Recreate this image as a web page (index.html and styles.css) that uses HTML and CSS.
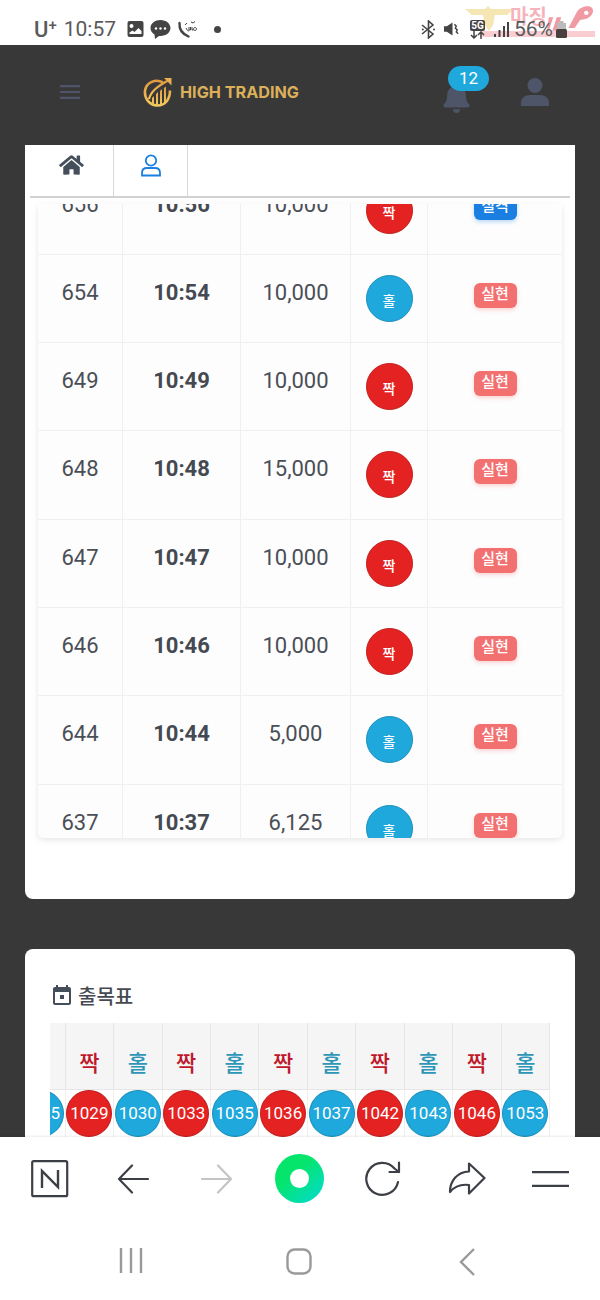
FILE: index.html
```html
<!DOCTYPE html>
<html lang="ko">
<head>
    <meta charset="UTF-8">
    <meta name="viewport" content="width=device-width, initial-scale=1.0">
    <title>High Trading</title>
    <link rel="stylesheet" href="styles.css">
</head>
<body>
    <!-- Phone status bar -->
    <div class="status-bar">
        <span class="carrier">U<sup>+</sup></span>
        <span class="clock">10:57</span>
        <svg class="st-icon" width="17" height="18" viewBox="0 0 16 18"><path fill="#444" fill-rule="evenodd" d="M2 1h12a2 2 0 0 1 2 2v12a2 2 0 0 1-2 2H2a2 2 0 0 1-2-2V3a2 2 0 0 1 2-2zm2 3a2 2 0 1 0 0 4 2 2 0 0 0 0-4zM2 14h12v-3l-3-3-4 4-2-1.500-3 2z"/></svg>
        <svg class="st-icon" width="21" height="21" viewBox="0 0 21 21"><path fill="#444" d="M10.500 1C5 1 .5 4.500.5 9c0 2.700 1.600 5 4 6.500L5 20l4-3.100c.5.100 1 .1 1.500.1 5.500 0 10-3.600 10-8s-4.500-8-10-8z"/><circle cx="6" cy="9.500" r="1.200" fill="#fff"/><circle cx="10.500" cy="9.500" r="1.200" fill="#fff"/><circle cx="15" cy="9.500" r="1.200" fill="#fff"/></svg>
        <svg class="st-icon" width="24" height="20" viewBox="0 0 24 20"><path fill="none" stroke="#444" stroke-width="2.400" stroke-linecap="round" d="M2.500 4c-.5 6 3 11 9 13.500"/><path fill="none" stroke="#444" stroke-width="1" d="M9 9c1 1 1 3 3 3M12 8v3h1.500v-3M15 8v3h1.500M18 8.500a1.500 1.500 0 1 0 .1 0M14 3l2 1 2-1.500M8 6l2-2"/></svg>
        <span class="st-dot"></span>

        <span class="status-right">
            <svg width="15" height="19" viewBox="0 0 15 19"><path fill="none" stroke="#444" stroke-width="1.600" d="M1 5l11 9-4.500 4V1L12 5 1 14"/><circle cx="1.800" cy="9.500" r="1" fill="#444"/><circle cx="13" cy="9.500" r="1" fill="#444"/></svg>
            <svg width="17" height="18" viewBox="0 0 18 18"><path fill="#444" d="M0 6h3l6-4v14l-6-4H0z"/><path fill="none" stroke="#444" stroke-width="1.500" d="M11 4l2 2-1 2 2 2-1 2 2 2"/></svg>
            <span class="net">
                <span class="net-5g">5G</span>
                <svg width="17" height="8" viewBox="0 0 17 8"><path fill="none" stroke="#444" stroke-width="1.500" d="M5 0v7M2 4l3 3 3-3M12 8V1M9 4l3-3 3 3"/></svg>
            </span>
            <svg width="15" height="17" viewBox="0 0 15 17"><path fill="#444" d="M0 13h2v3H0zM4.500 9h2v7h-2zM9 5h2v11H9zM13 1h2v15h-2z"/></svg>
            <span class="battery-pct">56%</span>
            <svg width="11" height="17" viewBox="0 0 11 17"><path fill="#bbb" d="M3.500 0h4v2h2.500v6H1V2h2.500z"/><rect x="0" y="8" width="11" height="9" rx="1.500" fill="#4a3f3f"/></svg>
        </span>

        <!-- watermark over the status bar -->
        <div class="watermark">
            <svg class="wm-eagle" width="48" height="30" viewBox="0 0 48 30"><path fill="#f5e6b4" d="M0 3h20l3-3 3 3h22l-6 6H30l-2 10-4 6-4-6-2-10H7z"/></svg>
            <span class="wm-text">마징</span>
            <svg class="wm-tail" width="50" height="34" viewBox="0 0 56 34"><path fill="#f29aa4" d="M2 14h5l-5 15H0zM11 14h5l-5 15H6zM33 9c3-7 13-9 17-6 4 4 0 11-7 13l-6 1-6 9h-7z"/><circle cx="44" cy="9" r="2.500" fill="#fff"/></svg>
            <div class="wm-bar"></div>
        </div>
    </div>

    <div class="main">
        <div class="topbar">
            <svg class="menu-icon" width="20" height="14" viewBox="0 0 20 14"><path fill="#4f5568" d="M0 0h20v2.200H0zM0 5.900h20v2.200H0zM0 11.800h20V14H0z"/></svg>
            <svg class="logo-mark" width="29" height="29" viewBox="0 0 29 29">
                <defs>
                    <linearGradient id="gold" x1="0" y1="0" x2="0" y2="1">
                        <stop offset="0" stop-color="#e0993f"/>
                        <stop offset="1" stop-color="#f2c75c"/>
                    </linearGradient>
                </defs>
                <path fill="none" stroke="url(#gold)" stroke-width="2.600" d="M20 4.500C13 .5 3 4 2 13c-.8 8 5 14 12 14.500 8 .3 13-6 13-15"/>
                <path fill="none" stroke="url(#gold)" stroke-width="2.200" d="M6 21C8 13 15 8 26 2"/>
                <path fill="#e8ae50" d="M21 0h7.500v7.500z"/>
                <path fill="url(#gold)" d="M9 20l2-2v8l-2-1zM13 16l2-2v13h-2zM17 13l2-2v15l-2 1zM21 10l2-1.500v15l-2 1.800z"/>
            </svg>
            <span class="logo-text">HIGH TRADING</span>
            <div class="bell-wrap">
                <svg width="27" height="30" viewBox="0 0 448 512"><path fill="#4f5568" d="M224 512c35.320 0 63.970-28.650 63.970-64H160.030c0 35.350 28.650 64 63.970 64zm215.390-149.710c-19.320-20.760-55.470-51.990-55.470-154.290 0-77.700-54.480-139.900-127.940-155.160V32c0-17.670-14.320-32-31.980-32s-31.980 14.330-31.980 32v20.840C118.560 68.100 64.080 130.300 64.080 208c0 102.300-36.150 133.530-55.470 154.290-6 6.450-8.660 14.160-8.610 21.710.11 16.400 12.980 32 32.100 32h383.800c19.120 0 32-15.600 32.100-32 .05-7.550-2.610-15.270-8.610-21.710z"/></svg>
                <span class="bell-badge">12</span>
            </div>
            <svg class="user-icon" width="28" height="28" viewBox="0 0 28 28"><circle cx="14" cy="7.500" r="7.500" fill="#4f5568"/><path fill="#4f5568" d="M0 28v-3c0-5 4-8 9-8h10c5 0 9 3 9 8v3z"/></svg>
        </div>

        <div class="card card-trades">
            <div class="tabs">
                <div class="tab tab-home">
                    <svg width="25" height="22" viewBox="0 0 576 512"><path fill="#454f5b" d="M280.370 148.260L96 300.110V464a16 16 0 0 0 16 16l112.060-.29a16 16 0 0 0 15.920-16V368a16 16 0 0 1 16-16h64a16 16 0 0 1 16 16v95.640a16 16 0 0 0 16 16.050L464 480a16 16 0 0 0 16-16V300L295.670 148.260a12.190 12.190 0 0 0-15.300 0zM571.600 251.470L488 182.560V44.050a12 12 0 0 0-12-12h-56a12 12 0 0 0-12 12v72.610L318.470 43a48 48 0 0 0-61 0L4.340 251.470a12 12 0 0 0-1.600 16.900l25.500 31A12 12 0 0 0 45.150 301l235.220-193.740a12.190 12.190 0 0 1 15.300 0L530.900 301a12 12 0 0 0 16.900-1.600l25.500-31a12 12 0 0 0-1.700-16.930z"/></svg>
                </div>
                <div class="tab tab-user">
                    <svg width="20" height="23" viewBox="0 0 20 23"><circle cx="10" cy="6.500" r="5.200" fill="none" stroke="#1a7fe0" stroke-width="1.800"/><path fill="none" stroke="#1a7fe0" stroke-width="1.800" d="M1 21.500v-2.500c0-3 2-5 5-5h8c3 0 5 2 5 5v2.500z"/></svg>
                </div>
            </div>

            <div class="trade-view">
                <div class="trade-list">
                    <div class="trade-row">
                        <div class="cell">656</div>
                        <div class="cell cell-time">10:56</div>
                        <div class="cell">10,000</div>
                        <div class="cell"><span class="ball ball-red">짝</span></div>
                        <div class="cell"><span class="tag tag-blue">실격</span></div>
                    </div>
                    <div class="trade-row">
                        <div class="cell">654</div>
                        <div class="cell cell-time">10:54</div>
                        <div class="cell">10,000</div>
                        <div class="cell"><span class="ball ball-blue">홀</span></div>
                        <div class="cell"><span class="tag">실현</span></div>
                    </div>
                    <div class="trade-row">
                        <div class="cell">649</div>
                        <div class="cell cell-time">10:49</div>
                        <div class="cell">10,000</div>
                        <div class="cell"><span class="ball ball-red">짝</span></div>
                        <div class="cell"><span class="tag">실현</span></div>
                    </div>
                    <div class="trade-row">
                        <div class="cell">648</div>
                        <div class="cell cell-time">10:48</div>
                        <div class="cell">15,000</div>
                        <div class="cell"><span class="ball ball-red">짝</span></div>
                        <div class="cell"><span class="tag">실현</span></div>
                    </div>
                    <div class="trade-row">
                        <div class="cell">647</div>
                        <div class="cell cell-time">10:47</div>
                        <div class="cell">10,000</div>
                        <div class="cell"><span class="ball ball-red">짝</span></div>
                        <div class="cell"><span class="tag">실현</span></div>
                    </div>
                    <div class="trade-row">
                        <div class="cell">646</div>
                        <div class="cell cell-time">10:46</div>
                        <div class="cell">10,000</div>
                        <div class="cell"><span class="ball ball-red">짝</span></div>
                        <div class="cell"><span class="tag">실현</span></div>
                    </div>
                    <div class="trade-row">
                        <div class="cell">644</div>
                        <div class="cell cell-time">10:44</div>
                        <div class="cell">5,000</div>
                        <div class="cell"><span class="ball ball-blue">홀</span></div>
                        <div class="cell"><span class="tag">실현</span></div>
                    </div>
                    <div class="trade-row">
                        <div class="cell">637</div>
                        <div class="cell cell-time">10:37</div>
                        <div class="cell">6,125</div>
                        <div class="cell"><span class="ball ball-blue">홀</span></div>
                        <div class="cell"><span class="tag">실현</span></div>
                    </div>
                </div>
            </div>
        </div>

        <div class="card card-chart">
            <h2 class="chart-title">
                <svg width="24" height="24" viewBox="0 0 24 24"><path fill="#454f5b" d="M19 4h-1V2h-2v2H8V2H6v2H5c-1.100 0-2 .9-2 2v14c0 1.100.9 2 2 2h14c1.100 0 2-.9 2-2V6c0-1.100-.9-2-2-2zm0 16H5V9h14v11zM10 12h4v4h-4z"/></svg>
                출목표
            </h2>
            <div class="chart-view">
                <div class="chart-grid">
                    <div class="ch-head"></div>
                    <div class="ch-head ch-red">짝</div>
                    <div class="ch-head ch-blue">홀</div>
                    <div class="ch-head ch-red">짝</div>
                    <div class="ch-head ch-blue">홀</div>
                    <div class="ch-head ch-red">짝</div>
                    <div class="ch-head ch-blue">홀</div>
                    <div class="ch-head ch-red">짝</div>
                    <div class="ch-head ch-blue">홀</div>
                    <div class="ch-head ch-red">짝</div>
                    <div class="ch-head ch-blue">홀</div>

                    <div class="ch-cell"><span class="num ball-blue">1025</span></div>
                    <div class="ch-cell"><span class="num ball-red">1029</span></div>
                    <div class="ch-cell"><span class="num ball-blue">1030</span></div>
                    <div class="ch-cell"><span class="num ball-red">1033</span></div>
                    <div class="ch-cell"><span class="num ball-blue">1035</span></div>
                    <div class="ch-cell"><span class="num ball-red">1036</span></div>
                    <div class="ch-cell"><span class="num ball-blue">1037</span></div>
                    <div class="ch-cell"><span class="num ball-red">1042</span></div>
                    <div class="ch-cell"><span class="num ball-blue">1043</span></div>
                    <div class="ch-cell"><span class="num ball-red">1046</span></div>
                    <div class="ch-cell"><span class="num ball-blue">1053</span></div>
                </div>
            </div>
        </div>
    </div>

    <!-- Browser toolbar -->
    <div class="toolbar">
        <svg width="38" height="38" viewBox="0 0 38 38"><rect x="1.200" y="1.200" width="35" height="35" rx="1.500" fill="none" stroke="#3c4046" stroke-width="2.200"/><path fill="none" stroke="#3c4046" stroke-width="2.400" d="M11 28V11l16 16V10"/></svg>
        <svg width="32" height="30" viewBox="0 0 32 30"><path fill="none" stroke="#3c4046" stroke-width="2.200" stroke-linecap="round" stroke-linejoin="round" d="M31 15H2M15 1.500L2 15l13 13.500"/></svg>
        <svg width="32" height="30" viewBox="0 0 32 30"><path fill="none" stroke="#c4c4c4" stroke-width="2.200" stroke-linecap="round" stroke-linejoin="round" d="M1 15h29M17 1.500L30 15 17 28.500"/></svg>
        <svg width="49" height="49" viewBox="0 0 49 49">
            <defs>
                <linearGradient id="green" x1="0.200" y1="0.100" x2="0.900" y2="0.900">
                    <stop offset="0.300" stop-color="#05e56c"/>
                    <stop offset="1" stop-color="#02dcc4"/>
                </linearGradient>
            </defs>
            <circle cx="24.500" cy="24.500" r="24.500" fill="url(#green)"/>
            <circle cx="24.500" cy="24.500" r="9.500" fill="#fff"/>
        </svg>
        <svg width="36" height="36" viewBox="0 0 36 36"><path fill="none" stroke="#3c4046" stroke-width="2.200" stroke-linecap="round" stroke-linejoin="round" d="M33 21a16 16 0 1 1-3.500-13.500L34 11M34 1.500V11h-9.500"/></svg>
        <svg width="38" height="33" viewBox="0 0 38 33"><path fill="none" stroke="#3c4046" stroke-width="2.200" stroke-linejoin="round" d="M21 1.500L36.500 16 21 31.500V23C13 22 6 25 2 30 2 19 9 10 21 9.500z"/></svg>
        <svg width="37" height="16" viewBox="0 0 37 16"><path fill="#3c4046" d="M0 0h37v2.200H0zM0 13.800h37V16H0z"/></svg>
    </div>

    <!-- Android navigation bar -->
    <div class="navbar">
        <svg width="24" height="25" viewBox="0 0 24 25"><path fill="none" stroke="#9a9a9a" stroke-width="2.400" d="M2 0v25M12 0v25M22 0v25"/></svg>
        <svg width="26" height="27" viewBox="0 0 26 27"><rect x="1.500" y="1.500" width="23" height="24" rx="7" fill="none" stroke="#9a9a9a" stroke-width="2.400"/></svg>
        <svg width="17" height="28" viewBox="0 0 17 28"><path fill="none" stroke="#9a9a9a" stroke-width="2.400" d="M15 1L2 14l13 13"/></svg>
    </div>
</body>
</html>
```

FILE: styles.css
```css
* {
    box-sizing: border-box;
}

body {
    margin: 0;
    width: 600px;
    height: 1300px;
    overflow: hidden;
    display: flex;
    flex-direction: column;
    background-color: #fff;
    color: #4a4f57;
    font-family: Roboto, "Noto Sans CJK KR", sans-serif;
}

/* Status bar */
.status-bar {
    position: relative;
    height: 45px;
    flex: none;
    display: flex;
    align-items: center;
    padding: 13px 33px 0 34px;
    background-color: #fff;
    color: #555;
    overflow: hidden;
}

.carrier {
    font-size: 22px;
    font-weight: 500;
    color: #5a5a5a;
}

.carrier sup {
    font-size: 15px;
    line-height: 0;
    vertical-align: 7px;
}

.clock {
    margin-left: 7px;
    margin-right: 11px;
    font-size: 21px;
    color: #5a5a5a;
}

.st-icon {
    margin-right: 6px;
}

.st-dot {
    width: 7px;
    height: 7px;
    margin-left: 10px;
    margin-left: 7px;
    border-radius: 50%;
    background-color: #444;
}

.status-right {
    position: relative;
    z-index: 1;
    margin-left: auto;
    display: flex;
    align-items: center;
    gap: 8px;
}

.net {
    display: flex;
    flex-direction: column;
    align-items: center;
}

.net-5g {
    padding: 0 1px;
    border-radius: 2px;
    background-color: #444;
    color: #fff;
    font-size: 10px;
    line-height: 11px;
    font-weight: 700;
}

.battery-pct {
    margin-left: -3px;
    margin-right: -5px;
    font-size: 21px;
    color: #5a5a5a;
}

.watermark {
    position: absolute;
    top: 3px;
    left: 465px;
    width: 132px;
    height: 34px;
}

.wm-eagle {
    position: absolute;
    top: 3px;
    left: 0;
}

.wm-text {
    position: absolute;
    top: 2px;
    left: 45px;
    color: #f5b4bb;
    font-size: 20px;
    line-height: 24px;
    font-weight: 700;
}

.wm-tail {
    position: absolute;
    top: 0;
    left: 82px;
}

.wm-bar {
    position: absolute;
    top: 28px;
    left: 15px;
    width: 115px;
    height: 6px;
    background-color: #f7c0c6;
    opacity: 0.8;
}

/* Dark page area */
.main {
    height: 1092px;
    flex: none;
    overflow: hidden;
    padding: 0 25px;
    background-color: #383838;
}

.topbar {
    position: relative;
    height: 100px;
    display: flex;
    align-items: center;
    padding: 0 26px 6px 35px;
}

.logo-mark {
    margin-left: 63px;
}

.logo-text {
    margin-left: 8px;
    color: #dcb05a;
    font-family: Inter, sans-serif;
    font-size: 16.200px;
    font-weight: 700;
    white-space: nowrap;
}

.bell-wrap {
    position: relative;
    margin-left: auto;
    margin-right: 51px;
    height: 30px;
    top: 6px;
}

.bell-badge {
    position: absolute;
    top: -17px;
    left: 5px;
    width: 41px;
    height: 25px;
    border-radius: 13px;
    background-color: #1fa8dc;
    color: #fff;
    font-size: 17px;
    line-height: 25px;
    text-align: center;
}

.card {
    background-color: #fff;
}

.card-trades {
    height: 754px;
    border-radius: 0 0 8px 8px;
    padding: 0 5px;
}

.tabs {
    height: 53px;
    display: flex;
    border-bottom: 2px solid #d2d2d2;
}

.tab {
    display: flex;
    justify-content: center;
    padding-top: 9px;
    border-right: 1.500px solid #d8d8d8;
}

.tab-home {
    width: 84px;
}

.tab-user {
    width: 74px;
}

.trade-view {
    width: 524px;
    height: 634px;
    margin: 6px 0 0 8px;
    overflow: hidden;
    border-radius: 0 0 5px 5px;
    background-color: #fdfdfd;
    box-shadow: 0 2px 6px rgba(0, 0, 0, 0.1);
}

/* scrolled part way through the first row */
.trade-list {
    margin-top: -37.500px;
}

.trade-row {
    height: 88.330px;
    display: grid;
    grid-template-columns: 85px 118px 110px 77px 134px;
    border-bottom: 1.500px solid #f0f0f0;
    text-align: center;
    font-size: 22px;
    line-height: 26px;
    color: #4a4f57;
}

.cell {
    padding-top: 25px;
    border-right: 1.500px solid #f0f0f0;
}

.cell:last-child {
    border-right: none;
}

.cell-time {
    font-weight: 700;
    color: #454a52;
}

.ball {
    display: inline-flex;
    align-items: center;
    justify-content: center;
    width: 47px;
    height: 47px;
    margin-top: -5px;
    padding-top: 5px;
    border-radius: 50%;
    font-size: 14px;
    font-weight: 500;
    line-height: 1;
    color: #fff;
}

.ball-red {
    background-color: #e52222;
    border: 1px solid #c21d1d;
    color: #fff;
}

.ball-blue {
    background-color: #1fa8dc;
    border: 1px solid #1b8fbc;
    color: #fff;
}

.tag {
    display: inline-block;
    width: 43px;
    height: 25px;
    margin-top: 3px;
    border-radius: 6px;
    background-color: #f27070;
    box-shadow: 0 2px 4px rgba(242, 112, 112, 0.3);
    color: #fff;
    font-size: 15px;
    font-weight: 500;
    line-height: 23px;
    vertical-align: top;
}

.tag-blue {
    background-color: #1a7fe0;
    box-shadow: 0 2px 4px rgba(26, 127, 224, 0.3);
}

/* Chart card */
.card-chart {
    height: 240px;
    margin-top: 50px;
    border-radius: 8px 8px 0 0;
    padding: 33px 25px 0;
}

.chart-title {
    display: flex;
    align-items: center;
    gap: 4px;
    margin: 0 0 15px;
    height: 26px;
    font-size: 20px;
    font-weight: 500;
    color: #454a52;
}

.chart-view {
    width: 500px;
    overflow: hidden;
}

.chart-grid {
    display: grid;
    grid-template-columns: repeat(11, 48.450px);
    margin-left: -32.800px;
    width: 533px;
}

.ch-head {
    height: 67px;
    display: flex;
    align-items: center;
    justify-content: center;
    padding-top: 9px;
    border-right: 1.500px solid #e6e6e6;
    border-bottom: 1.500px solid #e6e6e6;
    background-color: #f5f5f5;
    font-size: 22px;
    font-weight: 500;
}

.ch-red {
    color: #c0182b;
}

.ch-blue {
    color: #2e96b8;
}

.ch-cell {
    height: 60px;
    display: flex;
    justify-content: center;
    border-right: 1.500px solid #eee;
}

.num {
    width: 46px;
    height: 47px;
    border-radius: 50%;
    color: #fff;
    font-size: 17px;
    line-height: 45px;
    text-align: center;
}

/* Bottom bars */
.toolbar {
    position: relative;
    height: 85px;
    flex: none;
    display: grid;
    grid-template-columns: repeat(7, 1fr);
    align-items: center;
    justify-items: center;
    padding: 0 8px 2px;
    background-color: #fff;
    box-shadow: 0 -1px 2px rgba(0, 0, 0, 0.08);
}

.navbar {
    flex: none;
    height: 78px;
    display: grid;
    grid-template-columns: repeat(3, 168px);
    justify-items: center;
    align-items: start;
    padding: 26px 0 0 47px;
    background-color: #fff;
}
```
